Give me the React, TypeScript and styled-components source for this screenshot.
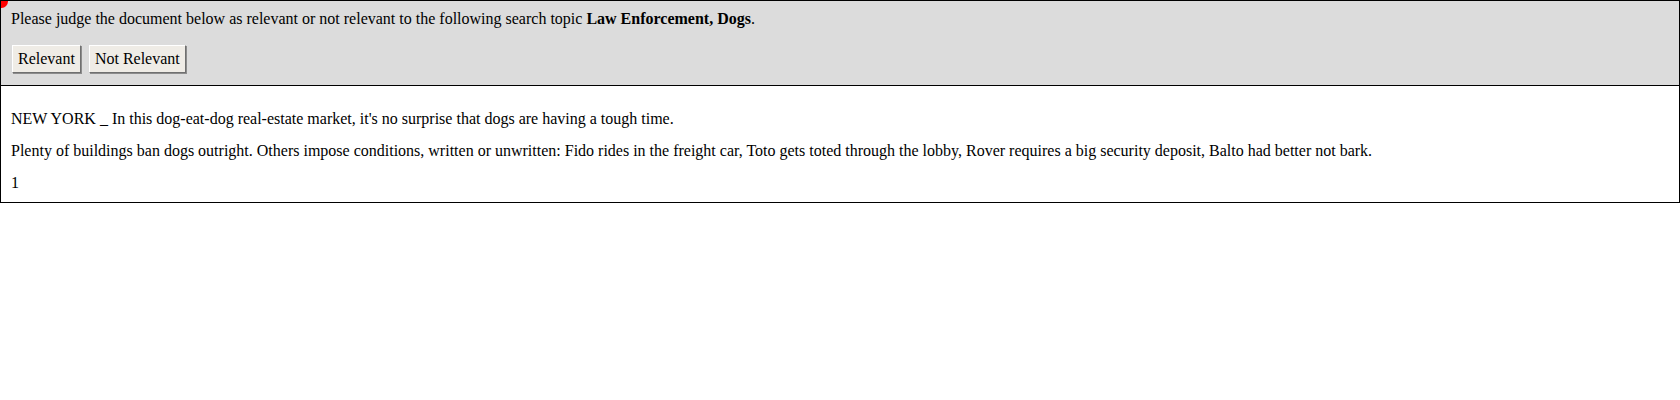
import * as React from 'react';
import styled, { createGlobalStyle } from 'styled-components';

const GlobalStyle = createGlobalStyle`
  html, body {
    margin: 0;
    padding: 0;
    background: #ffffff;
  }

  body {
    font-family: "Liberation Serif", "Times New Roman", serif;
    font-size: 16px;
    color: #000000;
  }
`;

export default function App() {
  return (
    <>
      <GlobalStyle />
      <JudgeFrame>
        <Marker />
        <TopicBar>
          <Prompt>
            Please judge the document below as relevant or not relevant to the following search
            topic <b>Law Enforcement, Dogs</b>.
          </Prompt>
          <ButtonRow>
            <JudgeButton type="button">Relevant</JudgeButton>
            <JudgeButton type="button">Not Relevant</JudgeButton>
          </ButtonRow>
        </TopicBar>
        <DocumentBody>
          <Paragraph>
            NEW YORK _ In this dog-eat-dog real-estate market, it's no surprise that dogs are
            having a tough time.
          </Paragraph>
          <Paragraph>
            Plenty of buildings ban dogs outright. Others impose conditions, written or unwritten:
            Fido rides in the freight car, Toto gets toted through the lobby, Rover requires a big
            security deposit, Balto had better not bark.
          </Paragraph>
          <Paragraph>1</Paragraph>
        </DocumentBody>
      </JudgeFrame>
    </>
  );
}

const JudgeFrame = styled.div`
  position: relative;
  border: 1px solid #000000;
  overflow: hidden;
`;

const Marker = styled.span`
  position: absolute;
  top: -6px;
  left: -6px;
  width: 13px;
  height: 13px;
  border-radius: 50%;
  background: #ff0000;
`;

const TopicBar = styled.div`
  background-color: #dcdcdc;
  border-bottom: 1px solid #000000;
  padding: 9px 10px 12px;
`;

const Prompt = styled.div`
  line-height: 17px;
`;

const ButtonRow = styled.div`
  display: flex;
  gap: 8px;
  margin-top: 18px;
  padding-left: 1px;
`;

const JudgeButton = styled.button`
  font-family: "Liberation Serif", "Times New Roman", serif;
  font-size: 16px;
  height: 28px;
  padding: 0 5px;
  background: #efece6;
  color: #000000;
  border: 1px solid;
  border-color: #ffffff #707070 #707070 #ffffff;
  box-shadow: 1px 1px 0 #8c8c8c;
  cursor: pointer;
`;

const DocumentBody = styled.div`
  padding: 9px 10px 11px;
`;

const Paragraph = styled.p`
  margin: 16px 0;
  line-height: 16px;

  &:last-child {
    margin-bottom: 0;
  }
`;
